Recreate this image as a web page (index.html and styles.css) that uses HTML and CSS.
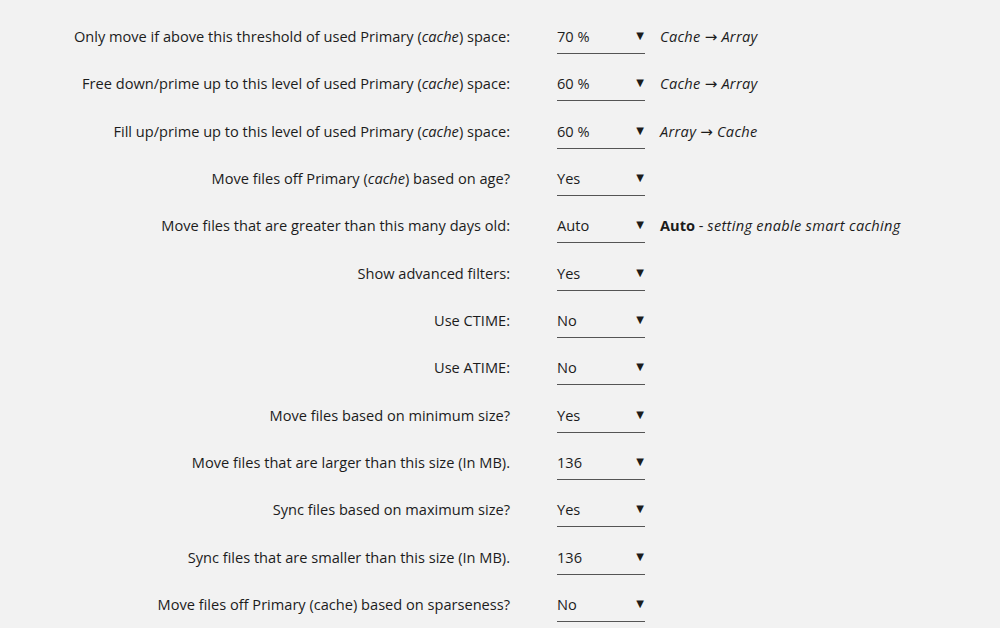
FILE: index.html
```html
<!DOCTYPE html>
<html lang="en">
<head>
  <meta charset="UTF-8" />
  <title>Mover Tuning</title>
  <link rel="stylesheet" href="styles.css">
</head>
<body>
  <div class="settings">
    <div class="row">
      <div class="label">Only move if above this threshold of used Primary (<em>cache</em>) space:</div>
      <div class="select"><span>70 %</span><span class="arrow">&#9660;</span></div>
      <div class="info"><em>Cache <span class="to">&rarr;</span> Array</em></div>
    </div>
    <div class="row">
      <div class="label">Free down/prime up to this level of used Primary (<em>cache</em>) space:</div>
      <div class="select"><span>60 %</span><span class="arrow">&#9660;</span></div>
      <div class="info"><em>Cache <span class="to">&rarr;</span> Array</em></div>
    </div>
    <div class="row">
      <div class="label">Fill up/prime up to this level of used Primary (<em>cache</em>) space:</div>
      <div class="select"><span>60 %</span><span class="arrow">&#9660;</span></div>
      <div class="info"><em>Array <span class="to">&rarr;</span> Cache</em></div>
    </div>
    <div class="row">
      <div class="label">Move files off Primary (<em>cache</em>) based on age?</div>
      <div class="select"><span>Yes</span><span class="arrow">&#9660;</span></div>
      <div class="info"></div>
    </div>
    <div class="row">
      <div class="label">Move files that are greater than this many days old:</div>
      <div class="select"><span>Auto</span><span class="arrow">&#9660;</span></div>
      <div class="info"><strong>Auto</strong> - <em>setting enable smart caching</em></div>
    </div>
    <div class="row">
      <div class="label">Show advanced filters:</div>
      <div class="select"><span>Yes</span><span class="arrow">&#9660;</span></div>
      <div class="info"></div>
    </div>
    <div class="row">
      <div class="label">Use CTIME:</div>
      <div class="select"><span>No</span><span class="arrow">&#9660;</span></div>
      <div class="info"></div>
    </div>
    <div class="row">
      <div class="label">Use ATIME:</div>
      <div class="select"><span>No</span><span class="arrow">&#9660;</span></div>
      <div class="info"></div>
    </div>
    <div class="row">
      <div class="label">Move files based on minimum size?</div>
      <div class="select"><span>Yes</span><span class="arrow">&#9660;</span></div>
      <div class="info"></div>
    </div>
    <div class="row">
      <div class="label">Move files that are larger than this size (In MB).</div>
      <div class="select"><span>136</span><span class="arrow">&#9660;</span></div>
      <div class="info"></div>
    </div>
    <div class="row">
      <div class="label">Sync files based on maximum size?</div>
      <div class="select"><span>Yes</span><span class="arrow">&#9660;</span></div>
      <div class="info"></div>
    </div>
    <div class="row">
      <div class="label">Sync files that are smaller than this size (In MB).</div>
      <div class="select"><span>136</span><span class="arrow">&#9660;</span></div>
      <div class="info"></div>
    </div>
    <div class="row">
      <div class="label">Move files off Primary (cache) based on sparseness?</div>
      <div class="select"><span>No</span><span class="arrow">&#9660;</span></div>
      <div class="info"></div>
    </div>
  </div>
</body>
</html>
```

FILE: styles.css
```css
body {
  background: #f2f2f2;
  color: #1c1c1c;
  font-family: "Open Sans", sans-serif;
  font-size: 14.6px;
  margin: 0;
}
.settings {
  padding-top: 12px;
}
.row {
  display: grid;
  grid-template-columns: 510px 88px 1fr;
  height: 47.33px;
  padding-top: 14px;
  box-sizing: border-box;
  line-height: 20px;
}
.label {
  text-align: right;
}
.select {
  grid-column: 2;
  margin-left: 47px;
  width: 88px;
  display: flex;
  justify-content: space-between;
  align-items: center;
  padding-bottom: 7px;
  border-bottom: 1px solid #555;
  height: 20px;
}
.arrow {
  font-family: "DejaVu Sans", sans-serif;
  font-size: 10px;
  margin-right: 1px;
}
.info {
  padding-left: 62px;
  white-space: nowrap;
}
.info em {
  letter-spacing: 0.3px;
}
.info .to {
  font-family: "DejaVu Sans", sans-serif;
  font-style: normal;
  font-size: 15px;
  letter-spacing: 0;
}
.info strong {
  font-weight: bold;
}
```
